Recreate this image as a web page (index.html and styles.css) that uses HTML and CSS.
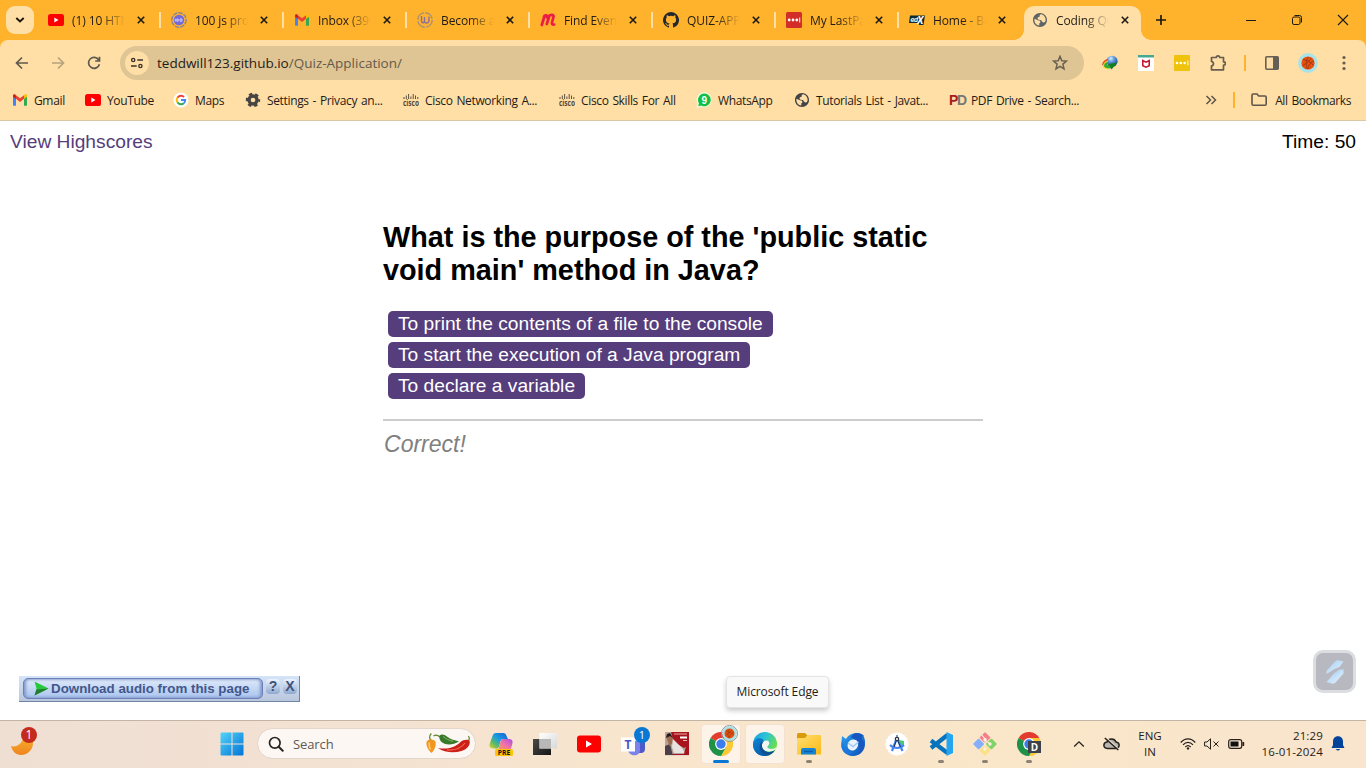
FILE: index.html
```html
<!DOCTYPE html>
<html lang="en">
<head>
<meta charset="utf-8">
<title>Coding Quiz</title>
<link rel="stylesheet" href="styles.css">
</head>
<body>
<svg class="defs" aria-hidden="true">
  <defs>
    <linearGradient id="g-start" x1="0" y1="0" x2="1" y2="1"><stop offset="0" stop-color="#53d3fb"/><stop offset="1" stop-color="#0274d4"/></linearGradient>
    <linearGradient id="g-moon" x1="0" y1="0" x2="0" y2="1"><stop offset="0" stop-color="#f6b02c"/><stop offset="1" stop-color="#ef8420"/></linearGradient>
    <linearGradient id="g-folder" x1="0" y1="0" x2="1" y2="1"><stop offset="0" stop-color="#ffdf70"/><stop offset="1" stop-color="#fbb917"/></linearGradient>
    <linearGradient id="g-edge" x1="0" y1="0" x2="1" y2=".5"><stop offset="0" stop-color="#1b9de2"/><stop offset=".5" stop-color="#2cc3d5"/><stop offset="1" stop-color="#6be04a"/></linearGradient>
    <linearGradient id="g-edge2" x1="0" y1="0" x2="1" y2="1"><stop offset="0" stop-color="#0a84d8"/><stop offset="1" stop-color="#0c4c93"/></linearGradient>
    <linearGradient id="g-cop1" x1="1" y1="0" x2="0" y2="1"><stop offset="0" stop-color="#1559d6"/><stop offset=".45" stop-color="#1c9ee0"/><stop offset=".7" stop-color="#58b96a"/><stop offset="1" stop-color="#f0d322"/></linearGradient>
    <linearGradient id="g-cop2" x1="1" y1="0" x2="0" y2="1"><stop offset="0" stop-color="#a54be8"/><stop offset=".5" stop-color="#f071a8"/><stop offset="1" stop-color="#fb9a55"/></linearGradient>
    <linearGradient id="g-bird" x1="0" y1="0" x2="1" y2="1"><stop offset="0" stop-color="#2aa0f2"/><stop offset="1" stop-color="#0f4fb5"/></linearGradient>
    <linearGradient id="g-dark" x1="0" y1="0" x2="1" y2="1"><stop offset="0" stop-color="#4a4a4a"/><stop offset="1" stop-color="#161616"/></linearGradient>
    <linearGradient id="g-light" x1="0" y1="0" x2="1" y2="1"><stop offset="0" stop-color="#fff"/><stop offset="1" stop-color="#d8d8d8"/></linearGradient>
    <linearGradient id="g-bolt" x1="0" y1="0" x2="1" y2="1"><stop offset="0" stop-color="#a9d1f5"/><stop offset="1" stop-color="#e3f1fd"/></linearGradient>
    <radialGradient id="g-globe" cx=".4" cy=".25" r=".8"><stop offset="0" stop-color="#d8f0ff"/><stop offset=".4" stop-color="#5b94d8"/><stop offset="1" stop-color="#173f86"/></radialGradient>
  </defs>
  <symbol id="yt" viewBox="0 0 16 16"><rect y="2" width="16" height="12" rx="2.6" fill="#f00"/><path d="M6.3 5.6v4.8l4.2-2.4z" fill="#fff"/></symbol>
  <symbol id="gmail" viewBox="0 0 16 16"><path d="M1 4.2v8.6c0 .6.4 1 1 1h2V6.5z" fill="#4285f4"/><path d="M12 13.800h2c.6 0 1-.4 1-1V4.200l-3 2.300z" fill="#34a853"/><path d="M4 6.800V3.200l4 3 4-3v3.600L8 10z" fill="#ea4335"/><path d="M1 4.700v-.9c0-1.500 1.300-1.900 2.300-1.200L4 3.200v3.700z" fill="#c5221f"/><path d="M15 4.700v-.9c0-1.500-1.300-1.900-2.300-1.200L12 3.200v3.700z" fill="#fbbc04"/></symbol>
  <symbol id="globe" viewBox="0.600 0.600 22.800 22.800"><path fill="currentColor" d="M12 2C6.480 2 2 6.480 2 12s4.480 10 10 10 10-4.480 10-10S17.520 2 12 2zm-1 17.930c-3.950-.49-7-3.850-7-7.930 0-.62.080-1.210.21-1.790L9 12.500q3 0 3.500 1.500.5 2-1.500 2.500v3.430zm6.900-4.540c-.9.300-1.900 0-2.900-1-.500-1.500-1.500-2.390-3-2.390-2 0-3.500-.5-3.500-2s1-2 3-2.500V6c0-1 1-1.800 2-2.200 4 .5 6.500 4.500 6.500 8.200 0 1.800-.8 2.800-2.100 3.390z"/></symbol>
  <symbol id="github" viewBox="0 0 16 16"><path fill="#24292f" d="M8 0a8 8 0 0 0-2.530 15.590c.4.070.55-.17.55-.38v-1.490c-2.230.48-2.700-.94-2.700-.94-.36-.92-.89-1.170-.89-1.170-.73-.5.050-.49.050-.49.810.060 1.230.830 1.230.830.720 1.230 1.880.870 2.340.670.070-.520.280-.880.510-1.080-1.780-.200-3.640-.890-3.640-3.950 0-.870.310-1.590.820-2.150-.080-.200-.360-1.020.080-2.120 0 0 .670-.210 2.200.820a7.600 7.600 0 0 1 4 0c1.530-1.040 2.200-.820 2.200-.820.440 1.100.160 1.920.080 2.120.510.560.820 1.270.820 2.150 0 3.070-1.870 3.750-3.650 3.950.290.250.540.730.540 1.480v2.190c0 .210.150.460.550.380A8 8 0 0 0 8 0z"/></symbol>
  <symbol id="close" viewBox="0 0 8 8"><path d="M.8.800l6.400 6.400M7.200.800L.8 7.200" stroke="#1c1a16" stroke-width="1.600" fill="none"/></symbol>
  <symbol id="cisco" viewBox="0 0 16 13"><path d="M1 3v2M3.300 1.500V5M5.600 0v5M7.900 2.500V5M10.200 0v5M12.500 1.500V5M14.800 3v2" stroke="#5d5242" stroke-width="1"/><text x="0" y="11.500" textLength="16" lengthAdjust="spacingAndGlyphs" class="cisco-name">cisco</text></symbol>
  <symbol id="ball" viewBox="0 0 20 20"><circle cx="10" cy="10" r="10" fill="#a9e3ea"/><circle cx="10" cy="10" r="6.600" fill="#e8500f"/><path d="M5 6.500c4 .5 8 2.500 10.500 6M4.500 12.500C8 11 12 7.500 13.500 5M10.500 4c-3 3.500-3 8-1 12M15.800 8c-3 1-5 3.500-6 8" stroke="#8a3412" stroke-width=".7" fill="none"/></symbol>
  <symbol id="chrome" viewBox="0 0 24 24"><path d="M12 12L1.600 6A12 12 0 0 1 22.400 6z" fill="#e33b2e"/><path d="M22.400 6A12 12 0 0 1 12 24l5.200-9L12 6z" fill="#fcc934"/><path d="M1.600 6A12 12 0 0 0 12 24l5.200-9L12 12z" fill="#1e9348"/><circle cx="12" cy="12" r="5.900" fill="#fff"/><circle cx="12" cy="12" r="4.700" fill="#3b7ded"/></symbol>
</svg>

<header class="browser ui">
  <div class="tabstrip">
    <div class="tabsearch"><svg width="10" height="6" viewBox="0 0 10 6"><path d="M1.300 1l3.700 3.500L8.700 1" stroke="#191510" stroke-width="1.900" fill="none"/></svg></div>
    <div class="tab"><svg class="fav"><use href="#yt"/></svg><span class="label">(1) 10 HTML</span><svg class="x"><use href="#close"/></svg></div>
    <div class="tab"><svg class="fav" viewBox="0 0 16 16"><circle cx="8" cy="8" r="7.200" fill="none" stroke="#8b8490" stroke-width="1.400" stroke-dasharray="4.500 1"/><circle cx="8" cy="8" r="5.300" fill="#7469d8"/><path d="M4.300 6.800v2.600M5.800 7h1.400v2.200H5.800zM9 7h2v2.200H9z" stroke="#d9d6ff" stroke-width=".9" fill="none"/></svg><span class="label">100 js projects</span><svg class="x"><use href="#close"/></svg></div>
    <div class="tab"><svg class="fav"><use href="#gmail"/></svg><span class="label">Inbox (399)</span><svg class="x"><use href="#close"/></svg></div>
    <div class="tab"><svg class="fav" viewBox="0 0 16 16"><circle cx="8" cy="8" r="7.200" fill="none" stroke="#a79176" stroke-width="1.400" stroke-dasharray="10 1.300"/><path d="M4.500 4v4.500c0 3 3 3 3 0V5M7.500 8.500c0 4 4.500 3 4.500-.5V4.500" fill="none" stroke="#8a70a0" stroke-width="1.400"/></svg><span class="label">Become a p</span><svg class="x"><use href="#close"/></svg></div>
    <div class="tab"><svg class="fav" viewBox="0 0 16 16"><path d="M1.800 13L4.500 4M6.800 12L9 5M4 4.500C5 2.500 8 3 7 5.500M8.500 5C9.500 2.500 14.500 2 13.500 5L12 10.500c-.5 1.700.5 2.200 2.200 2" fill="none" stroke="#ed1c46" stroke-width="2.700" stroke-linecap="round"/></svg><span class="label">Find Events</span><svg class="x"><use href="#close"/></svg></div>
    <div class="tab"><svg class="fav"><use href="#github"/></svg><span class="label">QUIZ-APPLI</span><svg class="x"><use href="#close"/></svg></div>
    <div class="tab"><svg class="fav" viewBox="0 0 16 16"><rect width="16" height="16" rx="1.500" fill="#d32d27"/><circle cx="3.200" cy="8" r="1.400" fill="#fff"/><circle cx="7" cy="8" r="1.400" fill="#fff"/><circle cx="10.800" cy="8" r="1.400" fill="#fff"/><path d="M13.700 5.500v5" stroke="#fff"/></svg><span class="label">My LastPass</span><svg class="x"><use href="#close"/></svg></div>
    <div class="tab nosep"><svg class="fav" viewBox="0 0 16 16"><path d="M1 3.500h15L14.500 13H10l-.5-2H0z" fill="#0b2b33"/><text x="1.200" y="9.800" class="edx">ed</text><text x="8.300" y="11.800" class="edx-x">X</text></svg><span class="label">Home - Bo</span><svg class="x"><use href="#close"/></svg></div>
    <div class="tab active"><svg class="fav gray"><use href="#globe"/></svg><span class="label">Coding Quiz</span><svg class="x"><use href="#close"/></svg></div>
    <svg class="newtab" width="12" height="12" viewBox="0 0 12 12"><path d="M6 1v10M1 6h10" stroke="#1c1a16" stroke-width="1.700"/></svg>
    <div class="winctl">
      <svg width="12" height="12" viewBox="0 0 12 12"><path d="M1 6.500h10" stroke="#1c1a16"/></svg>
      <svg width="12" height="12" viewBox="0 0 12 12"><rect x="1.500" y="3" width="7.500" height="7.500" rx="1.500" fill="none" stroke="#1c1a16"/><path d="M3.500 1.500H8.500a2 2 0 0 1 2 2v5" fill="none" stroke="#1c1a16"/></svg>
      <svg width="12" height="12" viewBox="0 0 12 12"><path d="M1 1l10 10M11 1L1 11" stroke="#1c1a16" stroke-width="1.100"/></svg>
    </div>
  </div>

  <div class="chrome-body">
    <div class="toolbar">
      <svg class="nav" viewBox="0 0 16 16"><path d="M14 8H3M8 2.500L2.500 8 8 13.500" class="ln"/></svg>
      <svg class="nav dim" viewBox="0 0 16 16"><path d="M2 8h11M8 2.500L13.500 8 8 13.500" class="ln"/></svg>
      <svg class="nav" viewBox="0 0 16 16"><path d="M12.800 5A5.500 5.500 0 1 0 13.400 9.200M13.500 1.800v4.200H9.200" class="ln"/></svg>
      <div class="omnibox">
        <div class="siteinfo"><svg width="12" height="12" viewBox="0 0 12 12"><path d="M6.300 3H12M0 9h5.700" stroke="#3b3329" stroke-width="1.600"/><circle cx="2.200" cy="3" r="1.600" fill="none" stroke="#3b3329" stroke-width="1.400"/><circle cx="9.400" cy="9" r="1.600" fill="none" stroke="#3b3329" stroke-width="1.400"/></svg></div>
        <span class="url">teddwill123.github.io<span>/Quiz-Application/</span></span>
        <svg class="star" width="16" height="16" viewBox="0 0 16 16"><path d="M8 1.300l1.800 4.400 4.700.4-3.600 3 1.100 4.700L8 11.300l-4 2.500 1.100-4.700-3.600-3 4.700-.4z" fill="none" stroke="#69604f" stroke-width="1.500"/></svg>
      </div>
      <div class="extensions">
        <svg viewBox="0 0 16 16"><circle cx="10" cy="6.300" r="5.600" fill="url(#g-globe)"/><path d="M0 10C.5 6.500 3 4.500 6 3.800l-.5 2C3.500 6.300 2 8 1.500 10.500z" fill="#e84f1d"/><path d="M1 10.500C1.500 7.800 4 6 6 5.800v1.500C4.500 7.500 2.500 9 2.500 10.800c0 1 2 1.800 4 1.700L6 14C3.500 14 .8 12.700 1 10.500z" fill="#f1d21a"/><path d="M2 10.600c.4-2 2-3.400 4-3.500l-.5 2c-1 .3-.6 1.200 1.500 1.100l2.500.3V13C6 14 1.800 13 2 10.600z" fill="#33ac35"/><path d="M6.500 9l9-1.500L9.500 14.500z" fill="#147f1c"/></svg>
        <svg viewBox="0 0 16 16"><rect width="16" height="16" fill="#fff"/><rect width="16" height="2.500" fill="#47a892"/><path d="M4.800 5.500v5.200L8 12.200l3.200-1.500V5.500L8 7.200z" fill="none" stroke="#c8182f" stroke-width="1.600"/></svg>
        <svg viewBox="0 0 16 16"><rect width="16" height="16" rx="1" fill="#efc30d"/><circle cx="3" cy="8" r="1.300" fill="#fff"/><circle cx="6.800" cy="8" r="1.300" fill="#fff"/><circle cx="10.600" cy="8" r="1.300" fill="#fff"/><path d="M13.900 5.500v5" stroke="#fff" stroke-width=".9"/></svg>
        <svg viewBox="0 0 16 16"><path d="M1.500 2.500H6.300c0-2.200 3.400-2.200 3.400 0h3.800v4.300c2.600 0 2.600 3.400 0 3.400v4.600H1.500v-4c2.600-.3 2.600-4 0-4.300z" fill="none" stroke="#665d50" stroke-width="1.700" stroke-linejoin="round"/></svg>
        <i class="vsep"></i>
        <svg viewBox="0 0 16 16"><rect x="1.800" y="1.800" width="12.400" height="12.400" rx="1" fill="none" stroke="#665f55" stroke-width="1.600"/><rect x="9" y="1.800" width="5.500" height="12.400" fill="#665f55"/></svg>
        <svg class="avatar"><use href="#ball"/></svg>
        <svg viewBox="0 0 16 16" fill="#665d50"><circle cx="8" cy="2.500" r="1.600"/><circle cx="8" cy="8" r="1.600"/><circle cx="8" cy="13.500" r="1.600"/></svg>
      </div>
    </div>

    <div class="bookmarks">
      <div class="bm"><svg><use href="#gmail"/></svg><span>Gmail</span></div>
      <div class="bm"><svg><use href="#yt"/></svg><span>YouTube</span></div>
      <div class="bm"><svg viewBox="0 0 16 16"><circle cx="8" cy="8" r="7.500" fill="#fff"/><path d="M4.500 5.600A4.200 4.200 0 0 1 11 5" stroke="#ea4335" fill="none" stroke-width="1.900"/><path d="M4.500 5.600a4.300 4.300 0 0 0 0 4.800" stroke="#fbbc05" fill="none" stroke-width="1.900"/><path d="M4.500 10.400a4.200 4.200 0 0 0 6.300.8" stroke="#34a853" fill="none" stroke-width="1.900"/><path d="M8 8h4.200c0 1.400-.5 2.500-1.400 3.200" stroke="#4285f4" fill="none" stroke-width="1.900"/></svg><span>Maps</span></div>
      <div class="bm"><svg viewBox="0 0 16 16"><circle cx="8" cy="8" r="4" fill="none" stroke="#474541" stroke-width="3.400"/><circle cx="8" cy="8" r="6" fill="none" stroke="#474541" stroke-width="2.400" stroke-dasharray="3.300 2.983" stroke-dashoffset="1.650"/></svg><span>Settings - Privacy an...</span></div>
      <div class="bm"><svg class="cisco"><use href="#cisco"/></svg><span>Cisco Networking A...</span></div>
      <div class="bm"><svg class="cisco"><use href="#cisco"/></svg><span>Cisco Skills For All</span></div>
      <div class="bm"><svg viewBox="0 0 16 16"><path d="M8.200.3a7.500 7.500 0 1 1-3.300 14.400L.5 15.800l1.200-4.200A7.500 7.500 0 0 1 8.200.3z" fill="#eefbe9"/><path d="M8.200 1.500a6.400 6.400 0 1 1-3 12l-3 .8.800-3A6.400 6.400 0 0 1 8.200 1.500z" fill="#12bf43"/><text x="8.200" y="11.800" text-anchor="middle" class="wa">9</text></svg><span>WhatsApp</span></div>
      <div class="bm"><svg class="dark"><use href="#globe"/></svg><span>Tutorials List - Javat...</span></div>
      <div class="bm"><b class="pd"><i>P</i>D</b><span>PDF Drive - Search...</span></div>
      <div class="bm-end">
        <svg width="12" height="10" viewBox="0 0 12 10"><path d="M1.500 1l4 4-4 4M6.500 1l4 4-4 4" fill="none" stroke="#5c5549" stroke-width="1.500"/></svg>
        <i class="vsep"></i>
        <svg width="16" height="14" viewBox="0 0 16 14"><path d="M1 2.200Q1 1 2 1h4l1.700 2H14q1.200 0 1.200 1.200V11q0 1.300-1.200 1.300H2.200Q1 12.300 1 11z" fill="none" stroke="#5d564a" stroke-width="1.600"/></svg>
        <span>All Bookmarks</span>
      </div>
    </div>
  </div>
</header>

<main class="page">
  <nav class="topline"><a>View Highscores</a><span>Time: 50</span></nav>
  <section class="quiz">
    <h1>What is the purpose of the 'public static void main' method in Java?</h1>
    <div class="choices">
      <button>To print the contents of a file to the console</button>
      <button>To start the execution of a Java program</button>
      <button>To declare a variable</button>
    </div>
    <p class="feedback">Correct!</p>
  </section>

  <div class="idm">
    <div class="idm-main"><svg width="15" height="15" viewBox="0 0 15 15"><path d="M.5.500L14.500 7.500.5 14.500 2.500 7.500z" fill="#26c93c"/><path d="M2.500 8.500l12-1L.5 14.500z" fill="#257c35"/></svg><span>Download audio from this page</span></div>
    <b>?</b><b>X</b>
  </div>
  <div class="floatbtn"><svg width="18" height="24" viewBox="0 0 18 24"><path d="M.5 14V11L9 1.500Q10 .3 12 .3L17.500 1.500 13.500 7 8.500 9z" fill="url(#g-bolt)"/><path d="M17.500 9.500v4L9.500 22.500Q8 24 6 23.500L.5 22 8.500 13z" fill="url(#g-bolt)"/><path d="M8.500 13l5-3.500 4 0-2 4-7 5z" fill="url(#g-bolt)"/></svg></div>
  <div class="tooltip ui">Microsoft Edge</div>
</main>

<footer class="taskbar ui">
  <div class="weather"><svg width="23" height="23" viewBox="0 0 23 23"><path d="M0 14c4 1.500 10-.5 13-9l9 4c1 8-5 14-12 14C5 23 1 19 0 14z" fill="url(#g-moon)"/></svg><b>1</b></div>
  <svg class="start" viewBox="0 0 24 24" fill="url(#g-start)"><path d="M.5 1.500Q.5.500 1.500.500H11.500v11H.5zM12.500.500h10q1 0 1 1v10h-11zM.5 12.500h11v11h-10q-1 0-1-1zM12.500 12.500h11v10q0 1-1 1h-10z"/></svg>
  <div class="search">
    <svg width="16" height="16" viewBox="0 0 16 16"><circle cx="6.800" cy="6.800" r="5.300" fill="none" stroke="#272422" stroke-width="1.700"/><path d="M10.700 10.700l4 4" stroke="#272422" stroke-width="2" stroke-linecap="round"/></svg>
    <span>Search</span>
    <svg class="chili" width="46" height="24" viewBox="0 0 46 24"><path d="M6.500 8.500C4 7 4 4 6.300 1.500M42.500 8.500c2-.5 2.500-2 1-4.500M15 5C12 2.500 10 3 8.500 4" stroke="#63822f" stroke-width="1.200" fill="none"/><path d="M2 9c3-2.300 7-1.500 8.500.8 1 3.500-1.200 9-4 11.200C3.500 19 0 12.500 2 9z" fill="#f19720"/><path d="M4 10.500c0 3 .3 5 1.500 7" stroke="#ffd479" stroke-width="1.300" fill="none"/><path d="M14.500 3.500c3-2 5.500-.5 8.500 1.800 3 2.200 6.500 3 11 4.200-6.500 4-14 4-18 0-1.500-2-2-4-1.500-6z" fill="#39792a"/><path d="M18 4.500c3 2.500 6 4 10 4.700" stroke="#87b766" stroke-width="1" fill="none"/><path d="M13 16c8 1.500 16 .5 22.500-6 3-2.500 6.500-3 9-1.500 1.500 5-3 9-8 10.500-8 2.500-17 1.500-23.500-3z" fill="#cc2019"/><path d="M22 18c8 .5 14-1.500 18-7" stroke="#f36c53" stroke-width="1.200" fill="none"/></svg>
  </div>
  <div class="apps">
    <div class="app"><svg viewBox="0 0 24 24"><path d="M7 1h7c2 0 3 1 3.500 3L19 7h-5c-2 0-2.500 2-3 4l-1 3.500c-1 3-3 2-5 2C1 16.500-.5 15 1 11L3.500 4C4.200 2 5 1 7 1z" fill="url(#g-cop1)"/><path d="M14 7h6c4 0 4 3 3 6l-1.500 5H9l2.500-8C12 8 12.500 7 14 7z" fill="url(#g-cop2)"/><rect x="6" y="17" width="18" height="7" rx="1.500" fill="#fec409"/><text x="15" y="22.900" text-anchor="middle" class="pre">PRE</text></svg></div>
    <div class="app"><svg viewBox="0 0 24 24"><rect x="6.500" y="1" width="17.500" height="15.500" fill="url(#g-light)"/><path d="M0 7h6.500v9.500H18V23H0z" fill="url(#g-dark)"/><rect x="6.500" y="7" width="11.500" height="9.500" fill="#b8b8b8"/></svg></div>
    <div class="app"><svg viewBox="0 0 24 24"><rect y="3.500" width="24" height="17" rx="3" fill="#f00"/><path d="M9 8.500v7l6-3.500z" fill="#fff"/></svg></div>
    <div class="app"><svg viewBox="0 0 24 24"><circle cx="20" cy="9" r="4" fill="#5059c9"/><path d="M14 9h10v8c0 5-6 4-6 4z" fill="#5059c9"/><path d="M7 9h12v9c0 7-11 7-12 0z" fill="#7b83eb"/><rect y="5.500" width="14" height="14" fill="#fff"/><text x="7" y="16.700" text-anchor="middle" class="teams">T</text></svg><b class="count">1</b></div>
    <div class="app"><svg viewBox="0 0 24 24"><rect width="24" height="24" fill="#a8141d"/><path d="M0 0h6l2 8 4 4 7 4 5-3v9H0z" fill="#b9a39a"/><path d="M0 14l5-2 3 12H0z" fill="#4b4048"/><path d="M1.500 6l3-4 3 4v5l-3 3z" fill="#a06c50"/><path d="M1 6l1-4 3-1 3 5-3-2z" fill="#22191b"/><path d="M7 15l1-8 9 9 3 5H9z" fill="#e8e3e0"/><path d="M9 2h13" stroke="#e9a8a6" stroke-width="1"/><path d="M15 5.500h7" stroke="#fff" stroke-width="2"/><path d="M18 8.500h4" stroke="#e9b8b6" stroke-width="1"/><path d="M19 22l2-8 3-2v11z" fill="#a8141d"/><path d="M0 23.500h24" stroke="#e3d4ca"/></svg></div>
    <div class="app on run"><svg><use href="#chrome"/></svg><svg class="badge"><use href="#ball"/></svg></div>
    <div class="app on"><svg viewBox="0 0 24 24"><circle cx="12" cy="12" r="12" fill="url(#g-edge)"/><path d="M0 12C1 6 7 5 11 8c-3 2-4 5-2 9 2 3 7 4.500 13 1-3 5-8 6.500-12 6C4 23.500-.5 18 0 12z" fill="url(#g-edge2)"/><path d="M11 9c5-2 7 2 3.500 5.500-.7 1 .5 2.500 4 2.500 2.500 0 4-1 5-2l-.8 2.600C18 20.500 12 20 10 17c-2-3-1-6 1-8z" fill="#f3f6ef"/><path d="M11 9c-2 2-3 5-1 8s6 4 11 2.500c-4 4-11 4-13.500-1C5.500 14 7 10 11 9z" fill="#104f94"/></svg></div>
    <div class="app open"><svg viewBox="0 0 24 24"><path d="M0 2.500Q0 1 1.500 1H8l2.500 2.500V8H0z" fill="#d99b0b"/><path d="M0 7q0-1 1.200-1H8l2.500-3H23q1 0 1 1v18.500H0z" fill="url(#g-folder)"/><path d="M4 22.500v-4.500q0-2 2-2h11q2 0 2 2v4.500z" fill="#1683d5"/><path d="M7 19.500h9" stroke="#0a5ea7" stroke-width="1.400"/></svg></div>
    <div class="app"><svg viewBox="0 0 24 24"><path d="M1 4l4 3c3-6 12-8 17-4l1 2c3 8 0 18-10 19C4 24.500-1 17 .500 10z" fill="url(#g-bird)"/><path d="M10 5c2-5 9-5 13-1-2 0-3 1-2 3 4 7 1 11-2 14 0-8-3-12-9-16z" fill="#1757bf"/><path d="M7 11c2-4.500 9-4.500 10-.5 1 5-3 8.500-6.500 8-4-1-4.500-4.500-3.500-7.500z" fill="#eaf3fd"/><path d="M7 11l5 3.500L17.500 10" stroke="#a2c9f2" stroke-width="1.500" fill="none"/><path d="M1 8c1 8 5 12 11 12-4 4-10 2-11.500-5z" fill="#1c76dd"/></svg></div>
    <div class="app"><svg viewBox="0 0 24 24"><circle cx="12" cy="12" r="10.800" fill="#fff" stroke="#fff" stroke-width="1.400" stroke-dasharray="3 1"/><path d="M14 8l5 1v5l-4 2z" fill="#43c978"/><path d="M11.500 7L7 19M12.500 7l5 12" stroke="#4484f2" stroke-width="2.200"/><path d="M5 13c4 4 10 4 14 0" stroke="#4484f2" stroke-width="2" fill="none"/><path d="M12 3v3M11.500 8L9 15M12.500 8l3 7" stroke="#26374b" stroke-width="1"/><circle cx="12" cy="7" r="1.700" fill="#fff" stroke="#26374b" stroke-width="1.300"/></svg></div>
    <div class="app open"><svg viewBox="0 0 24 24"><path d="M2 8.500L18.500 21M2 16L18.500 3" stroke="#0874bd" stroke-width="4.300"/><path d="M17.500 0L24 3v18l-6.500 3z" fill="#23a5f2"/></svg></div>
    <div class="app open"><svg viewBox="0 0 24 24"><g transform="rotate(45 12 12)"><rect x="3.500" y="3.500" width="8" height="8" rx="1" fill="#f67e88"/><rect x="12.500" y="3.500" width="8" height="8" rx="1" fill="#80d367"/><rect x="3.500" y="12.500" width="8" height="8" rx="1" fill="#86aefa"/><rect x="12.500" y="12.500" width="8" height="8" rx="1" fill="#fae087"/></g><path d="M9 3l3 4v10M12 8l5 4" fill="none" stroke="#f6ead8" stroke-width="1.200"/><circle cx="12" cy="7.500" r="1.700" fill="#fff0df"/><circle cx="17" cy="12" r="1.700" fill="#fff0df"/><circle cx="12" cy="17" r="1.700" fill="#fff0df"/></svg></div>
    <div class="app open"><svg><use href="#chrome"/></svg><b class="profile">D</b></div>
  </div>
  <div class="tray">
    <svg width="12" height="8" viewBox="0 0 12 8"><path d="M1.200 6.500L6 1.800l4.800 4.700" fill="none" stroke="#25211d" stroke-width="1.300"/></svg>
    <svg class="cloud" width="17" height="14" viewBox="0 0 17 14"><path d="M4.500 11.500C-.5 11 0 5.500 4 5c1.500-4 7.500-4 9 0 4 .5 4.500 6-.5 6.500z" fill="#b9b4ad" stroke="#25211d" stroke-width="1.500"/><path d="M3.200.800l12.500 11.500" stroke="#f9e6cd" stroke-width="1.200"/><path d="M1.800 1l13.500 12" stroke="#25211d" stroke-width="1.500"/></svg>
    <div class="lang">ENG<br>IN</div>
    <svg class="wifi" width="16" height="12" viewBox="0 0 16 12"><path d="M.7 4.500C5-.300 11-.300 15.300 4.500M3 6.800c3-3.300 7-3.300 10 0M5.300 9c1.800-1.800 3.600-1.800 5.400 0" fill="none" stroke="#25211d" stroke-width="1.200"/><circle cx="8" cy="10.400" r="1.200" fill="#25211d"/></svg>
    <svg class="sound" width="16" height="12" viewBox="0 0 16 12"><path d="M.600 4h2.400L6.500.800v10.400L3 8H.600zM9.500 3.500l5 5M14.500 3.500l-5 5" fill="none" stroke="#25211d" stroke-width="1"/></svg>
    <svg class="battery" width="17" height="10" viewBox="0 0 17 10"><rect x=".7" y=".7" width="13" height="8.600" rx="2" fill="none" stroke="#25211d" stroke-width="1.200"/><rect x="2.500" y="2.500" width="8" height="5" fill="#111"/><path d="M15.300 3v4" stroke="#25211d" stroke-width="1.800"/></svg>
    <div class="clock">21:29<br>16-01-2024</div>
    <svg class="bell" width="14" height="15" viewBox="0 0 14 15"><path d="M2 5.500C2-1.500 12-1.500 12 5.500V9l1.500 3H.5L2 9z" fill="#01439b"/><path d="M4.800 13h4.400q-2.200 3-4.400 0z" fill="#01439b"/></svg>
  </div>
</footer>
</body>
</html>
```
FILE: styles.css
```css
* { box-sizing: border-box; }
body { margin: 0; width: 1366px; height: 768px; overflow: hidden; display: flex; flex-direction: column; background: #fff; font-family: "Liberation Sans", Arial, sans-serif; }
svg { display: block; flex: none; }
.defs { position: absolute; width: 0; height: 0; }
.ui { font-family: "Open Sans", "Noto Sans", sans-serif; font-size: 12px; color: #1f1c18; }

/* Tab strip */
.browser { height: 121px; flex: none; background: #ffb22c; }
.tabstrip { height: 40px; display: flex; align-items: center; padding-left: 6px; }
.tabsearch { width: 28px; height: 28px; margin-right: 3px; border-radius: 9px; background: #ffdfa6; display: flex; align-items: center; justify-content: center; }
.tab { position: relative; width: 123px; height: 40px; flex: none; display: flex; align-items: center; padding-left: 11px; }
.tab:not(.nosep):not(.active)::after { content: ""; position: absolute; right: -1px; top: 12px; width: 2px; height: 16px; background: #ffdfa6; }
.fav { width: 16px; height: 16px; }
.gray { color: #5f6266; }
.dark { color: #424448; }
.label { width: 53px; margin: 1px 12px 0 8px; overflow: hidden; white-space: nowrap; letter-spacing: -.1px; -webkit-mask-image: linear-gradient(90deg, #000 55%, transparent 100%); mask-image: linear-gradient(90deg, #000 55%, transparent 100%); }
.x { width: 8px; height: 8px; }
.active { width: 120px; margin-left: 3px; padding-left: 8px; }
.active::before { content: ""; position: absolute; inset: 6px 3px 0 0; border-radius: 10px 10px 0 0; background: #ffdfa6; }
.active > * { position: relative; }
.active::after { content: ""; position: absolute; left: -10px; right: -7px; bottom: 0; height: 10px; background: radial-gradient(circle at 0 0, transparent 9.500px, #ffdfa6 10px) left / 10px 10px no-repeat, radial-gradient(circle at 100% 0, transparent 9.500px, #ffdfa6 10px) right / 10px 10px no-repeat; }
.newtab { margin-left: 11px; }
.winctl { margin-left: auto; padding-right: 17px; display: flex; gap: 34px; }
.edx { font: italic bold 7.500px "Open Sans", sans-serif; fill: #dfe9e4; letter-spacing: -.6px; }
.edx-x { font: italic bold 10px "Open Sans", sans-serif; fill: #fff; }

/* Toolbar */
.chrome-body { height: 81px; background: #ffdfa6; border-radius: 8px 8px 0 0; border-bottom: 1px solid #d9c8a6; }
.toolbar { height: 46px; display: flex; align-items: center; padding-left: 14px; }
.nav { width: 16px; height: 16px; margin-right: 20px; }
.nav:nth-child(3) { margin-right: 18px; }
.ln { fill: none; stroke: #5f5a50; stroke-width: 1.700; }
.dim { opacity: .45; }
.omnibox { width: 964px; height: 34px; border-radius: 17px; background: #dfc594; display: flex; align-items: center; padding: 0 16px 0 5px; }
.siteinfo { width: 24px; height: 24px; border-radius: 50%; background: #ffdfa6; display: flex; align-items: center; justify-content: center; }
.url { margin-left: 8px; font-size: 13.500px; }
.url span { color: #65594a; }
.star { margin-left: auto; }
.extensions { display: flex; align-items: center; margin-left: 18px; gap: 20px; }
.extensions > svg { width: 16px; height: 16px; }
.extensions > .avatar { width: 20px; height: 20px; margin: 0 -2px; }
.vsep { width: 2px; height: 16px; background: #ffb22c; flex: none; }
.extensions .vsep { margin: 0 -2px; }

/* Bookmarks */
.bookmarks { height: 28px; display: grid; grid-template-columns: 73px 88px 72px 158px 156px 137px 98px 155px 1fr auto; padding: 0 15px 0 12px; align-items: center; white-space: nowrap; letter-spacing: -.35px; word-spacing: 1.100px; }
.bm { display: flex; align-items: center; gap: 6px; }
.bm svg { width: 16px; height: 16px; }
.bm .cisco { height: 13px; }
.cisco-name { font: bold 8px "Open Sans", sans-serif; letter-spacing: 0; fill: #54483a; }
.wa { font: bold 10px "Liberation Sans", sans-serif; fill: #fff; }
.pd { width: 16px; display: flex; justify-content: space-between; font: bold 14px "Liberation Sans", sans-serif; letter-spacing: -2px; color: #777; }
.pd i { font-style: normal; color: #a51c1c; }
.bm-end { display: flex; align-items: center; }
.bm-end .vsep { margin: 0 16px; }
.bm-end span { margin-left: 8px; letter-spacing: -.4px; }

/* Quiz page */
.page { position: relative; height: 599px; flex: none; font-size: 19.200px; }
.topline { display: flex; justify-content: space-between; padding: 10px 10px 0; line-height: 22px; }
.topline a { color: #563d7c; }
.quiz { width: 600px; margin: 68px 0 0 383px; }
.quiz h1 { margin: 0; font-size: 28.800px; line-height: 33px; }
.choices { display: flex; flex-direction: column; align-items: flex-start; gap: 5px; padding: 24px 5px 20px; }
.choices button { border: 0; border-radius: 5px; background: #563d7c; color: #fff; font: 19.200px/22px "Liberation Sans", Arial, sans-serif; padding: 2px 10px; height: 26px; }
.feedback { margin: 0; padding: 10px 0 0 1px; border-top: 2px solid #ccc; color: gray; font-size: 23.040px; line-height: 26px; font-style: italic; }

.idm { position: absolute; left: 19px; top: 555px; width: 281px; height: 26px; display: flex; gap: 3px; padding: 2px 2px 3px 4px; background: linear-gradient(#d5e4f8, #bac6dc); border: solid #7085a5; border-width: 0 1px 1px 0; }
.idm-main { width: 241px; height: 21px; display: flex; align-items: center; gap: 2px; padding-left: 10px; border: 1px solid #6c80b7; border-radius: 5px; background: linear-gradient(#dfeafa, #a9c4ee); box-shadow: inset 2px 0 3px #8299cc, inset -2px 0 3px #8299cc; color: #42578c; font-weight: bold; font-size: 13.330px; white-space: nowrap; }
.idm > b { width: 14px; height: 15px; margin-top: 1px; border-radius: 4px; background: linear-gradient(#edf4ff, #8fa8cf); color: #3e5378; font-size: 14px; line-height: 15px; text-align: center; }
.floatbtn { position: absolute; left: 1313px; top: 529px; width: 43px; height: 43px; border: 3px solid #dcdde0; border-radius: 10px; background: #b8b9c0; display: flex; align-items: center; justify-content: center; }
.tooltip { position: absolute; left: 726px; top: 555px; width: 103px; height: 32px; border: 1px solid #e4e4e4; border-radius: 4px; background: #f9f9f9; box-shadow: 0 3px 5px #0003; text-align: center; line-height: 30px; letter-spacing: -.1px; }

/* Taskbar */
.taskbar { height: 48px; flex: none; display: flex; align-items: center; padding-bottom: 2px; border-top: 1px solid #c2b5a6; background: linear-gradient(90deg, #efdfd3, #f4e2d2 28%, #f8e5cd 45%, #fae6c8 75%, #f9e5ce); }
.weather { position: relative; width: 26px; margin-left: 11px; }
.weather b { position: absolute; left: 10px; top: -5px; width: 16px; height: 16px; border-radius: 50%; background: #c42b1c; color: #fff; font-weight: 400; line-height: 15px; text-align: center; }
.start { width: 24px; height: 24px; margin: 0 14px 0 183px; }
.search { width: 219px; height: 31px; display: flex; align-items: center; padding: 0 4px 0 10px; margin-left: -1px; border: 1px solid #e2d5c9; border-radius: 16px; background: #fcf7f2; font-size: 13px; color: #5e5a55; }
.search span { margin-left: 9px; letter-spacing: -.1px; }
.chili { margin-left: auto; }
.apps { display: flex; gap: 4px; margin-left: 5px; }
.app { position: relative; width: 40px; height: 40px; display: flex; align-items: center; justify-content: center; border-radius: 4px; }
.app > svg { width: 24px; height: 24px; }
.on { background: #fdf3e9; border: 1px solid #f3e2d2; }
.run::after, .open::after { content: ""; position: absolute; bottom: 1px; width: 6px; height: 3px; border-radius: 2px; background: #8d8273; }
.run::after { bottom: 0; width: 16px; background: #0878d4; }
.app > .badge { position: absolute; left: 19px; top: 0; width: 17px; height: 17px; border-radius: 50%; border: 1px solid #909a98; overflow: hidden; }
.count { position: absolute; left: 21px; top: 3px; width: 16px; height: 16px; border-radius: 50%; background: #0878d4; color: #fff; font-size: 11px; font-weight: 400; line-height: 15px; text-align: center; }
.profile { position: absolute; left: 19px; top: 17px; width: 13px; height: 12px; background: #3d4148; color: #fff; font-size: 10px; line-height: 12px; text-align: center; }
.pre { font: bold 6.800px "Open Sans", sans-serif; fill: #17130d; }
.teams { font: bold 12px "Open Sans", sans-serif; fill: #4a55bd; }
.tray { flex: 1; display: flex; align-items: center; padding-left: 24px; line-height: 16px; }
.cloud { margin-left: 18px; }
.lang { width: 34px; margin-left: 13px; text-align: center; font-size: 11.500px; }
.wifi { margin-left: 13px; }
.sound { margin-left: 8px; }
.battery { margin-left: 8px; }
.clock { width: 76px; margin-left: 2px; text-align: right; font-size: 11.500px; letter-spacing: .15px; }
.bell { margin-left: 8px; }
```
